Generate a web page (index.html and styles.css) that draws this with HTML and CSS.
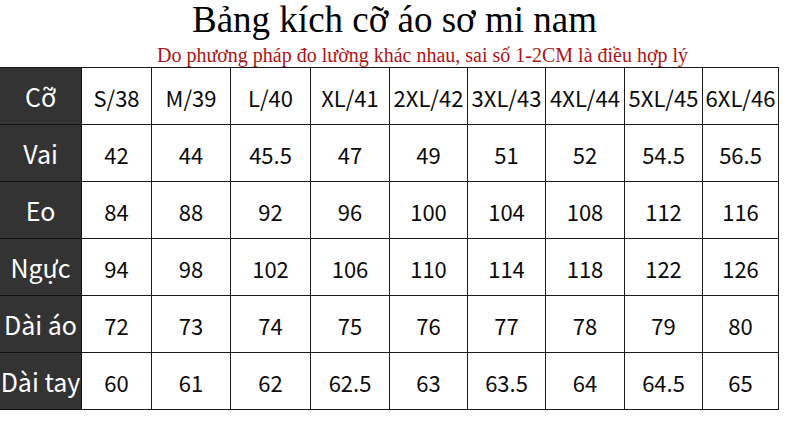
FILE: index.html
```html
<!DOCTYPE html>
<html lang="vi">
<head>
<meta charset="utf-8">
<link rel="stylesheet" href="styles.css">
</head>
<body>
<div class="head">
  <h1 class="title">Bảng kích cỡ áo sơ mi nam</h1>
  <p class="note">Do phương pháp đo lường khác nhau, sai số 1-2CM là điều hợp lý</p>
</div>
<div class="grid">
  <div class="c lab">Cỡ</div><div class="c">S/38</div><div class="c">M/39</div><div class="c">L/40</div><div class="c">XL/41</div><div class="c">2XL/42</div><div class="c">3XL/43</div><div class="c">4XL/44</div><div class="c">5XL/45</div><div class="c">6XL/46</div>
  <div class="c lab">Vai</div><div class="c">42</div><div class="c">44</div><div class="c">45.5</div><div class="c">47</div><div class="c">49</div><div class="c">51</div><div class="c">52</div><div class="c">54.5</div><div class="c">56.5</div>
  <div class="c lab">Eo</div><div class="c">84</div><div class="c">88</div><div class="c">92</div><div class="c">96</div><div class="c">100</div><div class="c">104</div><div class="c">108</div><div class="c">112</div><div class="c">116</div>
  <div class="c lab">Ngực</div><div class="c">94</div><div class="c">98</div><div class="c">102</div><div class="c">106</div><div class="c">110</div><div class="c">114</div><div class="c">118</div><div class="c">122</div><div class="c">126</div>
  <div class="c lab">Dài áo</div><div class="c">72</div><div class="c">73</div><div class="c">74</div><div class="c">75</div><div class="c">76</div><div class="c">77</div><div class="c">78</div><div class="c">79</div><div class="c">80</div>
  <div class="c lab">Dài tay</div><div class="c">60</div><div class="c">61</div><div class="c">62</div><div class="c">62.5</div><div class="c">63</div><div class="c">63.5</div><div class="c">64</div><div class="c">64.5</div><div class="c">65</div>
</div>
</body>
</html>
```
FILE: styles.css
```css
html, body {
  margin: 0;
  padding: 0;
  background: #ffffff;
}
body {
  width: 790px;
  height: 422px;
  overflow: hidden;
}
.head {
  height: 67px;
  box-sizing: border-box;
  font-family: "Liberation Serif", "Times New Roman", serif;
}
.title {
  margin: 0;
  padding: 1px 0 0 192px;
  font-size: 37px;
  font-weight: normal;
  line-height: 37px;
  color: #000;
}
.note {
  margin: 0;
  padding: 6px 0 0 157px;
  font-size: 20px;
  line-height: 22px;
  color: #b01212;
}
.grid {
  display: grid;
  grid-template-columns: 82px 70px 79px 80px 79px 78px 78px 79px 78px 76px;
  grid-auto-rows: 57px;
  width: 779px;
  border-top: 1.5px solid #1a1a1a;
  font-family: "Noto Sans CJK SC", "Noto Sans", sans-serif;
}
.c {
  box-sizing: border-box;
  border-right: 1.5px solid #1a1a1a;
  border-bottom: 1.5px solid #1a1a1a;
  display: flex;
  align-items: center;
  justify-content: center;
  padding-top: 2px;
  font-size: 22px;
  color: #0a0a0a;
  white-space: nowrap;
}
.lab {
  background: #333333;
  color: #ffffff;
  font-size: 25px;
  padding-top: 0;
  border-bottom-color: #111;
  border-right-color: #111;
}
```
